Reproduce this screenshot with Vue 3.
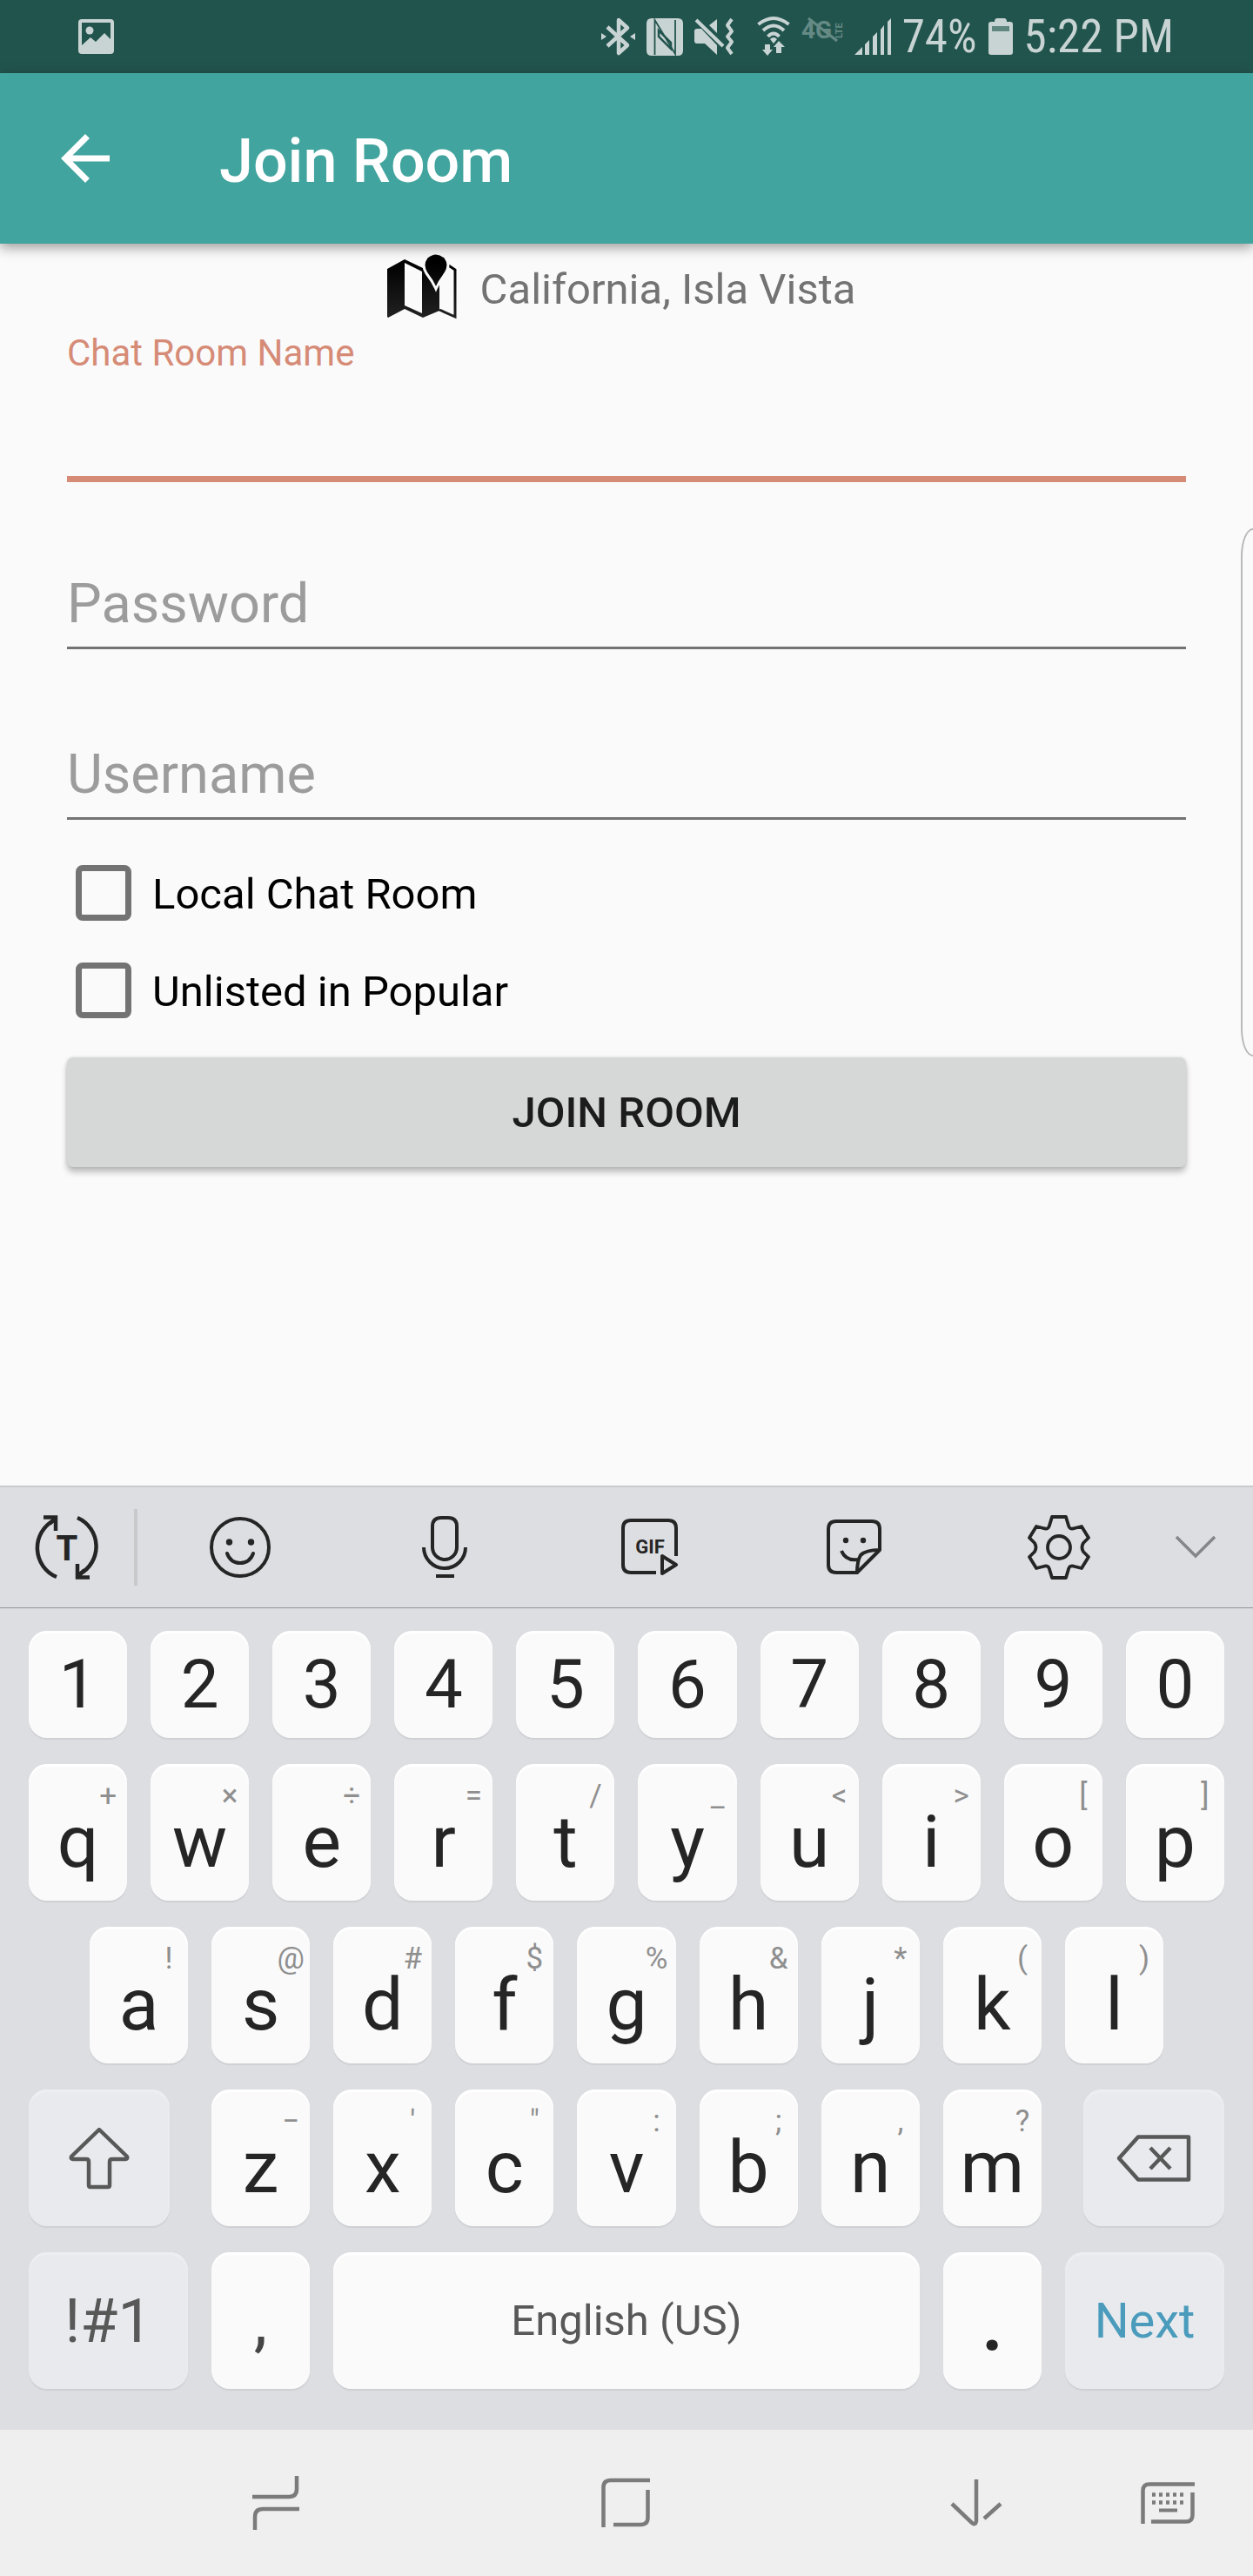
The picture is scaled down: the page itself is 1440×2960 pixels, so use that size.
<script setup>
import { ref } from 'vue'

const roomName = ref('')
const password = ref('')
const username = ref('')
const local = ref(false)
const unlisted = ref(false)

const digits = '1234567890'.split('')
const pair = (letters, hints) => letters.split('').map((letter, i) => ({ letter, hint: hints[i] }))
const topRow = pair('qwertyuiop', ['+', '×', '÷', '=', '/', '_', '<', '>', '[', ']'])
const homeRow = pair('asdfghjkl', ['!', '@', '#', '$', '%', '&', '*', '(', ')'])
const bottomRow = pair('zxcvbnm', ['−', "'", '"', ':', ';', ',', '?'])
</script>

<template>
  <div class="screen">
    <header class="status">
      <svg width="41" height="40" viewBox="0 0 41 40" aria-hidden="true">
        <path fill="currentColor" fill-rule="evenodd" d="M4 0H37Q41 0 41 4V36Q41 40 37 40H4Q0 40 0 36V4Q0 0 4 0ZM4 4V30L14 21L20 26L30 16L37 23V4Z" />
        <circle cx="13" cy="13" r="4.5" fill="currentColor" />
      </svg>
      <div class="status-right">
        <svg width="39" height="44" viewBox="0 0 39 44" aria-hidden="true">
          <path d="M7 11L30 32L20 41V3L30 12L7 33" fill="none" stroke="currentColor" stroke-width="4.5" stroke-linejoin="round" />
          <path d="M0 18L6 22L0 26ZM39 18L33 22L39 26Z" fill="currentColor" />
        </svg>
        <svg width="42" height="43" viewBox="0 0 42 43" aria-hidden="true">
          <path fill="currentColor" d="M6 0H36Q42 0 42 6V37Q42 43 36 43H6Q0 43 0 37V6Q0 0 6 0Z" />
          <path d="M9.500 42V2L33 41V2" fill="none" stroke="#22544e" stroke-width="1.8" />
          <path d="M14 14V21L28 35V28Z" fill="none" stroke="#22544e" stroke-width="2.5" />
        </svg>
        <svg width="46" height="42" viewBox="0 0 46 42" aria-hidden="true">
          <path fill="currentColor" d="M0 15Q0 12 3 12H8L26 31V42L12 29H3Q0 29 0 26ZM17 8L26 1V17Z" />
          <path d="M2 2L33 32" stroke="currentColor" stroke-width="4" />
          <path d="M43 1L38 8L43 15L38 21L43 27L38 34L43 41" fill="none" stroke="currentColor" stroke-width="4" stroke-linejoin="round" />
        </svg>
        <svg class="wifi" width="38" height="44" viewBox="0 0 38 44" aria-hidden="true">
          <path d="M1.500 8Q19 -6 36.500 8M7 15Q19 4 31 15M12.500 22Q19 15 25.500 22" fill="none" stroke="currentColor" stroke-width="4" />
          <path fill="currentColor" d="M15 25Q19 21 23 25L19 30ZM9 31H15V37H18L12 44L6 37H9ZM22 41H28V34H32L25 27L19 34H22Z" />
        </svg>
        <svg class="dim" width="48" height="44" viewBox="0 0 48 44" aria-hidden="true">
          <text x="0" y="24" font-size="28" font-weight="700" font-family="Roboto, sans-serif" fill="currentColor">4G</text>
          <text x="-24" y="47" font-size="11" font-weight="700" font-family="Roboto, sans-serif" fill="currentColor" transform="rotate(-90)">LTE</text>
          <path d="M8 1L41 27" stroke="currentColor" stroke-width="3" />
        </svg>
        <svg width="42" height="42" viewBox="0 0 42 42" aria-hidden="true">
          <path fill="currentColor" d="M0 42L9 33V42ZM12 30L17 25V42H12ZM21 21L26 16V42H21ZM30 13L34 8V42H30ZM38 4L42 0V42H38Z" />
        </svg>
        <span>74%</span>
        <svg width="28" height="42" viewBox="0 0 28 42" aria-hidden="true">
          <path fill="currentColor" d="M7 4Q7 0 10 0H18Q21 0 21 4H25Q28 4 28 7V39Q28 42 25 42H3Q0 42 0 39V7Q0 4 3 4Z" />
          <path d="M4 9H24V15H4Z" fill="#608680" />
        </svg>
        <span>5:22 PM</span>
      </div>
    </header>

    <div class="appbar">
      <button class="back" type="button" aria-label="Back">
        <svg width="84" height="84" viewBox="0 0 24 24"><path fill="currentColor" d="M20 11H7.830l5.590-5.590L12 4l-8 8 8 8 1.410-1.410L7.830 13H20v-2z" /></svg>
      </button>
      <h1>Join Room</h1>
    </div>

    <main>
      <form @submit.prevent>
        <div class="location">
          <svg width="80" height="74" viewBox="0 0 80 74" aria-hidden="true">
            <defs>
              <linearGradient id="mapInk" gradientUnits="userSpaceOnUse" x1="0" y1="10" x2="0" y2="74">
                <stop offset="0" stop-color="#000" /><stop offset="1" stop-color="#222" />
              </linearGradient>
            </defs>
            <path fill="url(#mapInk)" d="M0 17L20 6L41 16L56 40L60 33V65L41 73L20 63L1 73L0 72Z" />
            <path fill="#fafafa" d="M20 10L40 20V68L20 59Z" />
            <path d="M69 12L78 18V72L60 64" fill="none" stroke="url(#mapInk)" stroke-width="3" />
            <path fill="url(#mapInk)" stroke="#fafafa" stroke-width="3" d="M56 40Q52 31 45 22Q39 12 45 4Q56 -6 67 4Q73 12 67 22Q60 31 56 40Z" />
          </svg>
          <span>California, Isla Vista</span>
        </div>

        <div class="fields">
          <div class="field active">
            <label for="room">Chat Room Name</label>
            <input id="room" v-model="roomName" type="text" />
          </div>
          <div class="field">
            <input v-model="password" type="password" placeholder="Password" aria-label="Password" />
          </div>
          <div class="field">
            <input v-model="username" type="text" placeholder="Username" aria-label="Username" />
          </div>
        </div>

        <div class="checks">
          <label><input v-model="local" type="checkbox" /><span>Local Chat Room</span></label>
          <label><input v-model="unlisted" type="checkbox" /><span>Unlisted in Popular</span></label>
        </div>

        <button class="join" type="submit">JOIN ROOM</button>
      </form>
      <div class="edge" aria-hidden="true"></div>
    </main>

    <section class="keyboard" aria-label="Keyboard">
      <div class="tools">
        <button class="tool first" type="button" aria-label="Predictive text">
          <svg width="74" height="74" viewBox="0 0 74 74">
            <path d="M25 71A36 36 0 0 1 22 6M49 3A36 36 0 0 1 51 68" fill="none" stroke="currentColor" stroke-width="4.500" />
            <path d="M10 2.500H24V18M24 3L17 10M63 71.500H49V56M49 71L57 63" fill="none" stroke="currentColor" stroke-width="4.500" />
            <text x="37" y="52" text-anchor="middle" font-family="Roboto, sans-serif" font-size="40" font-weight="700" fill="currentColor">T</text>
          </svg>
        </button>
        <button class="tool" type="button" aria-label="Emoji">
          <svg width="70" height="70" viewBox="0 0 70 70" fill="none" stroke="currentColor" stroke-width="4">
            <circle cx="35" cy="35" r="33" />
            <path d="M20 42Q24 53 35 53Q46 53 50 42" stroke-linecap="round" />
            <circle cx="22.500" cy="29" r="3.700" fill="currentColor" stroke="none" /><circle cx="47.500" cy="29" r="3.700" fill="currentColor" stroke="none" />
          </svg>
        </button>
        <button class="tool" type="button" aria-label="Voice input">
          <svg width="52" height="72" viewBox="0 0 52 72" fill="none" stroke="currentColor" stroke-width="4">
            <path d="M12 12Q12 2 22 2H30Q40 2 40 12V36A14 14 0 0 1 12 36ZM2 36A24 24 0 0 0 50 36M16 69H37" />
          </svg>
        </button>
        <button class="tool" type="button" aria-label="GIF">
          <svg width="66" height="66" viewBox="0 0 66 66" fill="none" stroke="currentColor" stroke-width="4" stroke-linejoin="round">
            <path d="M63 43V11Q63 2 54 2H11Q2 2 2 11V53Q2 62 11 62H40" />
            <path d="M47 43V63L63 53Z" />
            <text x="33" y="40" text-anchor="middle" font-family="Roboto, sans-serif" font-size="22" font-weight="700" fill="currentColor" stroke="none">GIF</text>
          </svg>
        </button>
        <button class="tool" type="button" aria-label="Stickers">
          <svg width="64" height="64" viewBox="0 0 64 64" fill="none" stroke="currentColor" stroke-width="4" stroke-linejoin="round">
            <path d="M35 61H11Q2 61 2 52V11Q2 2 11 2H52Q61 2 61 11V35L35 61Q35 48 39 41Q45 35 61 35" />
            <path d="M17 36Q22 48 36 46" />
            <circle cx="22" cy="24" r="3.200" fill="currentColor" stroke="none" /><circle cx="42" cy="24" r="3.200" fill="currentColor" stroke="none" />
          </svg>
        </button>
        <button class="tool" type="button" aria-label="Settings">
          <svg width="72" height="74" viewBox="-36 -37 72 74" fill="none" stroke="currentColor" stroke-width="3.800" stroke-linejoin="round">
            <path d="M-8 -35H8L11 -25Q12 -20 18 -22L26 -24L34 -11L28 -5Q25 0 28 5L34 11L26 24L18 22Q12 20 11 25L8 35H-8L-11 25Q-12 20 -18 22L-26 24L-34 11L-28 5Q-25 0 -28 -5L-34 -11L-26 -24L-18 -22Q-12 -20 -11 -25Z" />
            <circle r="13" />
          </svg>
        </button>
        <button class="tool last" type="button" aria-label="Collapse">
          <svg width="46" height="26" viewBox="0 0 46 26"><path d="M1 1L23 23L45 1" fill="none" stroke="currentColor" stroke-width="3.500" /></svg>
        </button>
      </div>

      <div class="rows">
        <div class="row">
          <button v-for="d in digits" :key="d" class="key digit" type="button">{{ d }}</button>
        </div>
        <div class="row">
          <button v-for="k in topRow" :key="k.letter" class="key letter" type="button"><span class="hint">{{ k.hint }}</span>{{ k.letter }}</button>
        </div>
        <div class="row home">
          <button v-for="k in homeRow" :key="k.letter" class="key letter" type="button"><span class="hint">{{ k.hint }}</span>{{ k.letter }}</button>
        </div>
        <div class="row shift-row">
          <button class="key fn" type="button" aria-label="Shift">
            <svg width="70" height="72" viewBox="0 0 70 72"><path d="M35 3L67 34Q68 37 65 37H50Q47 37 47 40V67Q47 69 45 69H25Q23 69 23 67V40Q23 37 20 37H5Q2 37 3 34Z" fill="none" stroke="currentColor" stroke-width="4.500" stroke-linejoin="round" /></svg>
          </button>
          <div class="row">
            <button v-for="k in bottomRow" :key="k.letter" class="key letter" type="button"><span class="hint">{{ k.hint }}</span>{{ k.letter }}</button>
          </div>
          <button class="key fn" type="button" aria-label="Backspace">
            <svg width="86" height="54" viewBox="0 0 86 54" fill="none" stroke="currentColor" stroke-width="4.500" stroke-linejoin="round"><path d="M25 2.500H83V51.500H25L3 27ZM39 15L62 39M62 15L39 39" /></svg>
          </button>
        </div>
        <div class="row space-row">
          <button class="key fn symbols" type="button">!#1</button>
          <button class="key comma" type="button">,</button>
          <button class="key space" type="button">English (US)</button>
          <button class="key period" type="button">.</button>
          <button class="key fn next" type="button">Next</button>
        </div>
      </div>
    </section>

    <nav class="navbar">
      <button type="button" aria-label="Recent apps">
        <svg width="54" height="62" viewBox="0 0 54 62"><path d="M0 24H42Q51 24 51 15V0M54 38H12Q3 38 3 47V62" fill="none" stroke="currentColor" stroke-width="4.500" /></svg>
      </button>
      <button type="button" aria-label="Home">
        <svg width="56" height="58" viewBox="0 0 56 58"><path d="M2.500 57V11Q2.500 3 11 3H56M53.500 14V46Q53.500 54 45 54H14" fill="none" stroke="currentColor" stroke-width="4.500" /></svg>
      </button>
      <button type="button" aria-label="Hide keyboard">
        <svg width="60" height="54" viewBox="0 0 60 54"><path d="M30 0V48Q29 53 25 50L2 28M58 28L39 45" fill="none" stroke="currentColor" stroke-width="4.500" /></svg>
      </button>
      <button type="button" aria-label="Change keyboard">
        <svg width="62" height="48" viewBox="0 0 62 48" fill="none" stroke="currentColor">
          <path d="M2.500 48V10Q2.500 2.500 10 2.500H62M59.500 12V38Q59.500 45.500 52 45.500H12" stroke-width="4.500" />
          <path d="M13 14.500H51M13 23.500H51" stroke-width="4.500" stroke-dasharray="4 4" /><path d="M21 32.500H42" stroke-width="4" />
        </svg>
      </button>
    </nav>
  </div>
</template>

<style>
body { margin: 0; background: #fafafa; }
</style>

<style scoped>
.screen {
  display: flex;
  flex-direction: column;
  min-height: 100vh;
  background: #fafafa;
  font-family: Roboto, "Liberation Sans", sans-serif;
}
* { box-sizing: border-box; }
svg { display: block; flex: none; overflow: visible; }
button { padding: 0; border: 0; background: none; color: inherit; font: inherit; }

.status {
  display: flex;
  align-items: center;
  justify-content: space-between;
  height: 84px;
  padding: 0 91px 0 90px;
  background: #22544e;
  color: #c8d4d3;
}
.status-right {
  display: flex;
  align-items: center;
  gap: 13px;
  font-family: "Roboto Condensed", "Liberation Sans Narrow", Roboto, sans-serif;
  font-size: 53px;
  line-height: 84px;
  white-space: nowrap;
}
.wifi { margin-left: 13px; }
.dim { color: #658a85; }

.appbar {
  position: relative;
  z-index: 1;
  display: flex;
  align-items: center;
  gap: 112px;
  height: 196px;
  padding: 0 56px;
  background: #42a49e;
  color: #fff;
  box-shadow: 0 4px 14px rgba(0, 0, 0, 0.4);
}
h1 { margin: 0; padding-top: 6px; font-size: 70px; line-height: 84px; font-weight: 500; }

main { position: relative; flex: 1; padding: 12px 77px 77px; }
.location {
  display: flex;
  justify-content: center;
  align-items: flex-end;
  gap: 27px;
  padding-right: 12px;
  color: #737373;
  font-size: 49px;
  line-height: 66px;
}
.fields { display: flex; flex-direction: column; gap: 97px; padding-top: 15px; }
.field { display: flex; flex-direction: column; padding-bottom: 4px; }
.field label { color: #d68b77; font-size: 42px; line-height: 50px; }
.field input {
  width: 100%;
  height: 95px;
  padding: 0 0 8px;
  border: 0;
  border-bottom: 3px solid #737373;
  border-radius: 0;
  outline: 0;
  background: none;
  color: #1c1c1c;
  font: 63px/84px Roboto, "Liberation Sans", sans-serif;
}
.field input::placeholder { color: #9c9c9c; opacity: 1; }
.field.active { padding-bottom: 0; }
.field.active input { height: 123px; border-bottom: 7px solid #d68b77; }

.checks { padding-top: 24px; }
.checks label { display: flex; align-items: center; gap: 24px; height: 112px; padding-left: 10px; color: #000; font-size: 49px; line-height: 60px; }
.checks span { padding-top: 4px; }
.checks input { appearance: none; flex: none; width: 64px; height: 64px; margin: 0; border: 7px solid #737373; border-radius: 8px; }
.checks input:checked { background: #737373; }

.join {
  width: 100%;
  height: 126px;
  margin-top: 21px;
  border-radius: 7px;
  background: #d6d8d7;
  box-shadow: 0 6px 7px rgba(0, 0, 0, 0.24), 0 0 4px rgba(0, 0, 0, 0.12);
  color: #1c1c1c;
  font-size: 49px;
  font-weight: 500;
}
.edge {
  position: absolute;
  top: 327px;
  right: 0;
  width: 14px;
  height: 607px;
  border: 2px solid #b9b9b9;
  border-right: 0;
  border-radius: 14px 0 0 14px / 32px 0 0 32px;
}

.keyboard { border-top: 2px solid #c9cacc; background: #dddee2; color: #252525; }
.tools { display: flex; align-items: stretch; height: 139px; padding-right: 27px; border-bottom: 1px solid #929396; }
.tool { display: flex; flex: 1; align-items: center; justify-content: center; }
.tool.first {
  flex: 0 0 158px;
  padding-right: 4px;
  background: linear-gradient(#c8c9cb, #c8c9cb) right center / 4px 88px no-repeat;
}
.tool.last { flex: 0 0 78px; color: #858689; }

.rows { display: flex; flex-direction: column; gap: 30px; padding: 26px 33px 47px; }
.row { display: flex; gap: 27px; }
.row.home { padding: 0 70px; }
.row.shift-row { display: grid; grid-template-columns: 162fr 954fr 162fr; gap: 48px; }
.row.space-row { display: grid; grid-template-columns: 183fr 113fr 674fr 113fr 183fr; }
.key {
  position: relative;
  display: flex;
  flex: 1;
  min-width: 0;
  align-items: center;
  justify-content: center;
  height: 157px;
  border-radius: 21px;
  background: #fafafa;
  box-shadow: inset 0 3px 2px #fff, 0 2px 1px #cfd0d4;
}
.key.digit { height: 123px; font-size: 78px; }
.key.letter { padding-top: 22px; font-size: 84px; }
.key.fn { background: #e8eaee; box-shadow: inset 0 3px 2px #eeeff2, 0 2px 1px #cfd0d4; color: #585858; }
.key.symbols { font-size: 70px; }
.key.comma { color: #454545; font-size: 78px; }
.key.space { color: #585858; font-size: 49px; }
.key.period { font-size: 96px; font-weight: 500; }
.key.next { color: #4b9cbc; font-size: 56px; }
.hint { position: absolute; top: 15px; right: 0; width: 44px; color: #8f8f8f; font-size: 35px; line-height: 44px; text-align: center; }

.navbar {
  display: grid;
  grid-template-columns: 322fr 482fr 324fr 116fr;
  height: 168px;
  padding: 0 40px 0 156px;
  background: #efefef;
  color: #7b7b7b;
}
.navbar button { display: flex; align-items: center; justify-content: center; }
</style>
